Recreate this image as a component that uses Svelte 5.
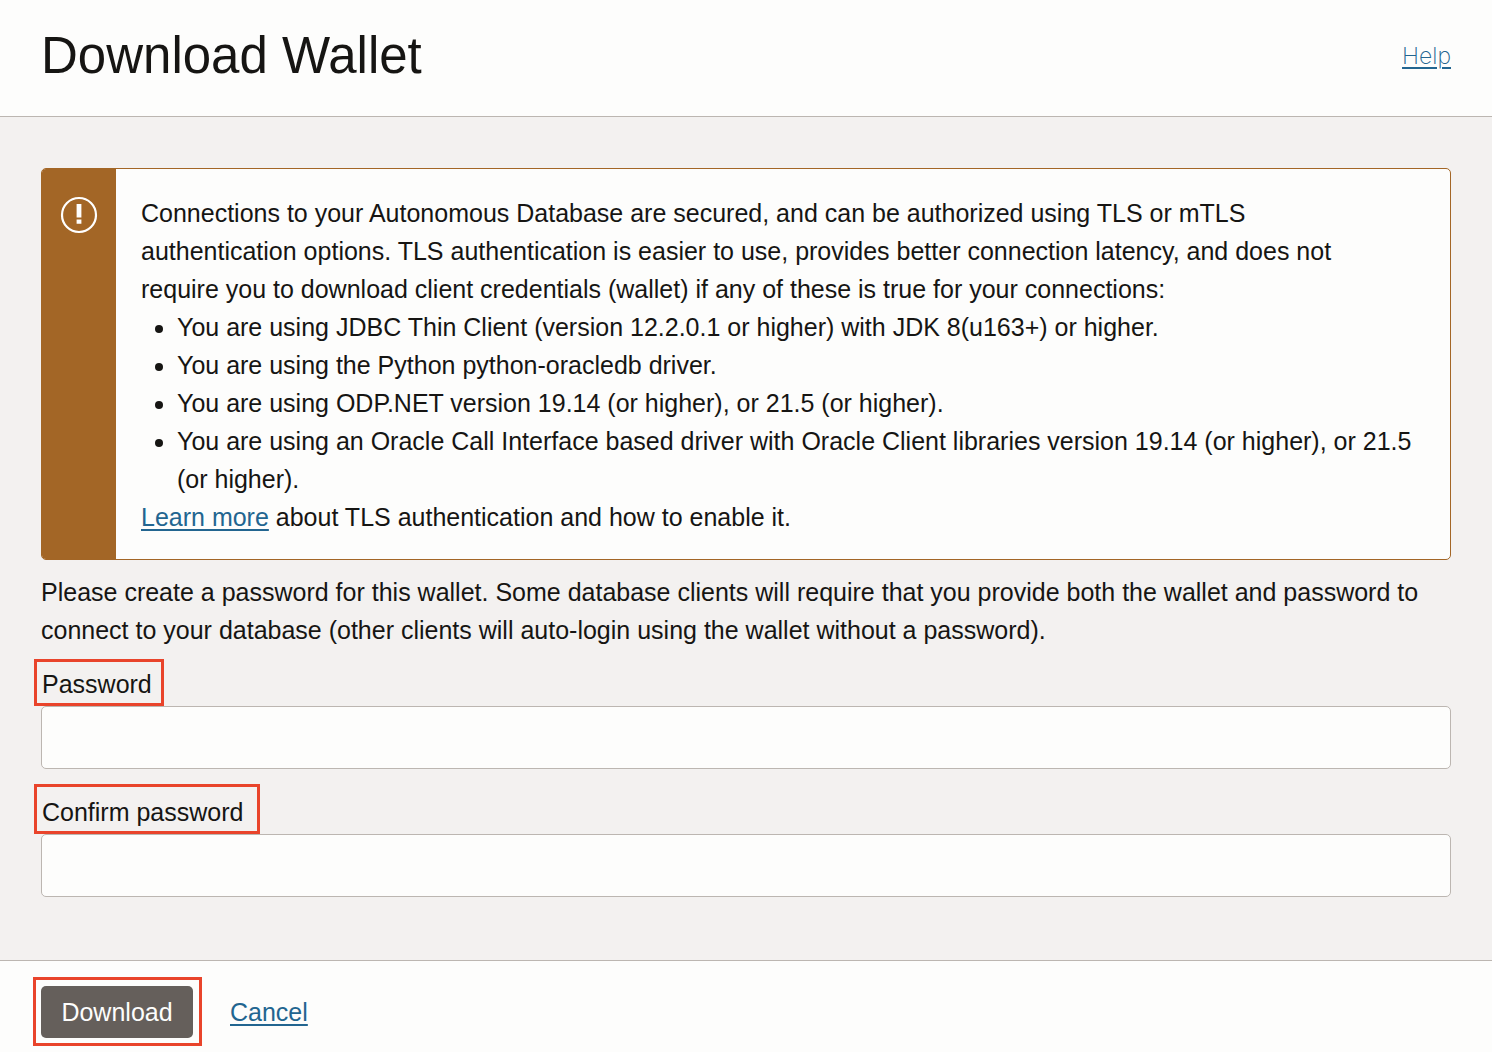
<script>
  const conditions = [
    'You are using JDBC Thin Client (version 12.2.0.1 or higher) with JDK 8(u163+) or higher.',
    'You are using the Python python-oracledb driver.',
    'You are using ODP.NET version 19.14 (or higher), or 21.5 (or higher).',
    'You are using an Oracle Call Interface based driver with Oracle Client libraries version 19.14 (or higher), or 21.5 (or higher).'
  ];
  let password = $state('');
  let confirmation = $state('');
</script>

<form class="dialog" onsubmit={(e) => e.preventDefault()}>
  <header>
    <h1>Download Wallet</h1>
    <a class="help" href="#help">Help</a>
  </header>

  <main>
    <section class="notice">
      <div class="stripe">
        <svg viewBox="0 0 38 38" aria-hidden="true">
          <circle cx="19" cy="19" r="17" fill="none" stroke="#fff" stroke-width="2.2" />
          <path d="M16.6 8h4.8v13.6h-4.8zM16.6 23.4h4.8v4.4h-4.8z" fill="#fff" />
        </svg>
      </div>
      <div class="message">
        <p class="summary">Connections to your Autonomous Database are secured, and can be authorized using TLS or mTLS authentication options. TLS authentication is easier to use, provides better connection latency, and does not require you to download client credentials (wallet) if any of these is true for your connections:</p>
        <ul>
          {#each conditions as condition}
            <li>{condition}</li>
          {/each}
        </ul>
        <p><a href="#tls">Learn more</a> about TLS authentication and how to enable it.</p>
      </div>
    </section>

    <p class="intro">Please create a password for this wallet. Some database clients will require that you provide both the wallet and password to connect to your database (other clients will auto-login using the wallet without a password).</p>

    <div class="field">
      <label for="password">Password</label>
      <input id="password" type="password" bind:value={password} />
    </div>
    <div class="field second">
      <label for="confirm">Confirm password</label>
      <input id="confirm" type="password" bind:value={confirmation} />
    </div>
  </main>

  <footer>
    <div class="marked"><button type="submit">Download</button></div>
    <a href="#cancel">Cancel</a>
  </footer>
</form>

<style>
  :global(body) {
    margin: 0;
    background: #fdfdfc;
  }
  .dialog {
    box-sizing: border-box;
    min-height: 100vh;
    display: flex;
    flex-direction: column;
    color: #161513;
    font: 25px/38px 'Liberation Sans', Arial, sans-serif;
    background: #fdfdfc;
  }
  p, ul, h1 {
    margin: 0;
  }
  a {
    color: #226590;
    text-decoration: underline;
    text-decoration-thickness: 2px;
    text-underline-offset: 3px;
  }
  header {
    display: flex;
    align-items: center;
    justify-content: space-between;
    padding: 26px 41px 30px;
    border-bottom: 1px solid #bcb6b1;
  }
  h1 {
    font-size: 51px;
    line-height: 60px;
    font-weight: 400;
  }
  .help {
    font-family: Inter, 'Liberation Sans', sans-serif;
    font-size: 23px;
    font-weight: 200;
  }
  main {
    flex: 1;
    padding: 51px 41px 63px;
    background: #f3f1f0;
  }
  .notice {
    display: flex;
    border: 1px solid #a36626;
    border-radius: 5px;
    background: #fdfdfc;
    overflow: hidden;
  }
  .stripe {
    flex: none;
    width: 74px;
    display: flex;
    justify-content: center;
    background: #a36626;
  }
  .stripe svg {
    width: 38px;
    height: 38px;
    margin-top: 27px;
  }
  .message {
    padding: 25px 16px 23px 25px;
  }
  .summary {
    padding-right: 40px;
  }
  ul {
    padding-left: 36px;
  }
  .intro {
    margin-top: 13px;
  }
  .field {
    display: flex;
    flex-direction: column;
    align-items: flex-start;
    margin-top: 10px;
  }
  .second {
    margin-top: 15px;
  }
  label {
    margin-left: -7px;
    padding: 5px 9px 2px 5px;
    border: 3px solid #e9442b;
    line-height: 34px;
  }
  .second label {
    padding: 8px 14px 2px 5px;
  }
  input {
    box-sizing: border-box;
    width: 100%;
    height: 63px;
    padding: 0 16px;
    border: 1px solid #bcb6b1;
    border-radius: 5px;
    background: #fdfdfc;
    font: inherit;
    color: inherit;
  }
  footer {
    display: flex;
    align-items: center;
    gap: 28px;
    padding: 16px 33px 6px;
    border-top: 1px solid #bcb6b1;
  }
  .marked {
    padding: 6px 6px 5px 5px;
    border: 3px solid #e9442b;
  }
  button {
    display: block;
    min-width: 152px;
    height: 52px;
    padding: 0 20px;
    border: 0;
    border-radius: 5px;
    background: #655f5b;
    color: #fdfdfc;
    font: inherit;
  }
</style>
